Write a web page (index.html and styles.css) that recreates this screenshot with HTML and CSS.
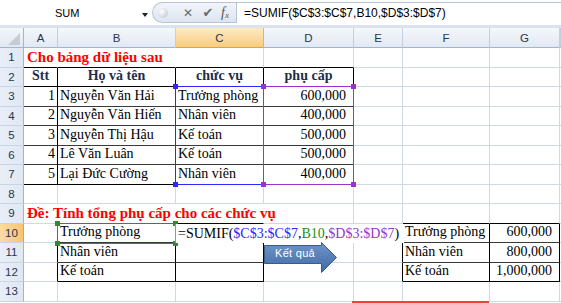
FILE: index.html
```html
<!DOCTYPE html>
<html lang="vi">
<head>
    <meta charset="UTF-8">
    <title>SUMIF</title>
    <link rel="stylesheet" href="styles.css">
</head>
<body>
    <div class="fbar">
        <div class="namebox">
            <span class="name">SUM</span>
            <span class="dd"></span>
        </div>
        <div class="fbtns">
            <span class="dot"></span>
            <span class="btn">&#x2715;</span>
            <span class="btn chk">&#x2714;</span>
            <span class="fx">f<sub>x</sub></span>
        </div>
        <div class="finput">=SUMIF($C$3:$C$7,B10,$D$3:$D$7)</div>
    </div>

    <div class="sheet">
        <!-- header -->
        <div class="corner"><span class="tri"></span></div>
        <div class="ch">A</div><div class="ch">B</div><div class="ch sel">C</div><div class="ch">D</div>
        <div class="ch">E</div><div class="ch">F</div><div class="ch">G</div><div class="ch"></div>

        <!-- 1 -->
        <div class="rh">1</div>
        <div class="c nr bb title">Cho bảng dữ liệu sau</div><div class="c nr bb"></div><div class="c bb"></div><div class="c bb"></div>
        <div class="c"></div><div class="c"></div><div class="c"></div><div class="c"></div>

        <!-- 2 -->
        <div class="rh">2</div>
        <div class="c br bb hd">Stt</div><div class="c br bb hd">Họ và tên</div><div class="c br bb hd">chức vụ</div><div class="c br bb hd">phụ cấp</div>
        <div class="c"></div><div class="c"></div><div class="c"></div><div class="c"></div>

        <!-- 3 -->
        <div class="rh">3</div>
        <div class="c br gb num">1</div><div class="c br gb">Nguyễn Văn Hải</div><div class="c br gb">Trưởng phòng</div><div class="c br gb money">600,000</div>
        <div class="c"></div><div class="c"></div><div class="c"></div><div class="c"></div>

        <!-- 4 -->
        <div class="rh">4</div>
        <div class="c br gb num">2</div><div class="c br gb">Nguyễn Văn Hiến</div><div class="c br gb">Nhân viên</div><div class="c br gb money">400,000</div>
        <div class="c"></div><div class="c"></div><div class="c"></div><div class="c"></div>

        <!-- 5 -->
        <div class="rh">5</div>
        <div class="c br gb num">3</div><div class="c br gb">Nguyễn Thị Hậu</div><div class="c br gb">Kế toán</div><div class="c br gb money">500,000</div>
        <div class="c"></div><div class="c"></div><div class="c"></div><div class="c"></div>

        <!-- 6 -->
        <div class="rh">6</div>
        <div class="c br gb num">4</div><div class="c br gb">Lê Văn Luân</div><div class="c br gb">Kế toán</div><div class="c br gb money">500,000</div>
        <div class="c"></div><div class="c"></div><div class="c"></div><div class="c"></div>

        <!-- 7 -->
        <div class="rh">7</div>
        <div class="c br bb num">5</div><div class="c br bb">Lại Đức Cường</div><div class="c br bb">Nhân viên</div><div class="c br bb money">400,000</div>
        <div class="c"></div><div class="c"></div><div class="c"></div><div class="c"></div>

        <!-- 8 -->
        <div class="rh">8</div>
        <div class="c"></div><div class="c"></div><div class="c"></div><div class="c"></div>
        <div class="c"></div><div class="c"></div><div class="c"></div><div class="c"></div>

        <!-- 9 -->
        <div class="rh">9</div>
        <div class="c nr title">Đề: Tính tổng phụ cấp cho các chức vụ</div><div class="c nr bb"></div><div class="c nr bb"></div><div class="c"></div>
        <div class="c"></div><div class="c bb"></div><div class="c bb"></div><div class="c"></div>

        <!-- 10 -->
        <div class="rh sel">10</div>
        <div class="c br"></div><div class="c br gb">Trưởng phòng</div><div class="c br gb"></div><div class="c"></div>
        <div class="c br"></div><div class="c br gb">Trưởng phòng</div><div class="c br gb money">600,000</div><div class="c"></div>

        <!-- 11 -->
        <div class="rh">11</div>
        <div class="c br"></div><div class="c br gb">Nhân viên</div><div class="c br gb"></div><div class="c"></div>
        <div class="c br"></div><div class="c br gb">Nhân viên</div><div class="c br gb money">800,000</div><div class="c"></div>

        <!-- 12 -->
        <div class="rh">12</div>
        <div class="c br"></div><div class="c br bb">Kế toán</div><div class="c br bb"></div><div class="c"></div>
        <div class="c br"></div><div class="c br bb">Kế toán</div><div class="c br bb money">1,000,000</div><div class="c"></div>

        <!-- 13 -->
        <div class="rh">13</div>
        <div class="c"></div><div class="c"></div><div class="c"></div><div class="c"></div>
        <div class="c"></div><div class="c"></div><div class="c"></div><div class="c"></div>

        <!-- vùng tham chiếu của công thức -->
        <div class="range blue">
            <i class="h tl"></i><i class="h tr"></i><i class="h bl"></i><i class="h brc"></i>
        </div>
        <div class="range purple">
            <i class="h tl"></i><i class="h tr"></i><i class="h bl"></i><i class="h brc"></i>
        </div>
        <div class="range green">
            <i class="h tl"></i><i class="h tr"></i><i class="h bl"></i><i class="h brc"></i>
        </div>

        <div class="edit">=SUMIF(<span class="f-blue">$C$3:$C$7</span>,<span class="f-green">B10</span>,<span class="f-purple">$D$3:$D$7</span>)</div>

        <div class="arrow">
            <svg width="74" height="32" viewBox="0 0 74 32">
                <defs>
                    <linearGradient id="ag" x1="0" y1="0" x2="0" y2="1">
                        <stop offset="0" stop-color="#6f95c8"/>
                        <stop offset="1" stop-color="#3e6aa6"/>
                    </linearGradient>
                </defs>
                <path d="M0.5 3.5 H57.5 V0.5 L72.5 15.5 L57.5 30.5 V21.5 H0.5 Z" fill="url(#ag)" stroke="#385d8a" stroke-width="1"/>
            </svg>
            <span class="label">Kết quả</span>
        </div>

        <div class="redline"></div>
    </div>
</body>
</html>
```

FILE: styles.css
```css
body {
    margin: 0;
    width: 561px;
    height: 303px;
    overflow: hidden;
    background: #fff;
    font-family: "Liberation Serif", serif;
}

/* thanh công thức */
.fbar {
    display: flex;
    height: 25px;
    border-bottom: 3px solid #dbe3ee;
    background: #fff;
}

.namebox {
    width: 152px;
    display: flex;
    align-items: center;
    position: relative;
    font-family: "Liberation Sans", sans-serif;
    font-size: 11px;
    color: #000;
}

.name {
    margin-left: 55px;
}

.dd {
    position: absolute;
    left: 142px;
    top: 13px;
    border-left: 3px solid transparent;
    border-right: 3px solid transparent;
    border-top: 4px solid #222;
}

.fbtns {
    width: 84px;
    display: flex;
    align-items: center;
    background: linear-gradient(#f2f5fa, #dde5f0);
    border: 1px solid #b7c4d6;
    border-right: none;
    border-radius: 12px 0 0 12px;
    margin-top: 2px;
    height: 21px;
    box-sizing: border-box;
}

.dot {
    width: 10px;
    height: 10px;
    border-radius: 50%;
    background: radial-gradient(circle at 35% 35%, #ffffff, #b9c1cc);
    margin-left: 5px;
    margin-right: 10px;
}

.btn {
    font-family: "DejaVu Sans", sans-serif;
    font-size: 12px;
    color: #666b73;
    width: 20px;
    text-align: center;
}

.chk {
    font-size: 13px;
}

.fx {
    font-family: "Liberation Serif", serif;
    font-style: italic;
    font-size: 14px;
    color: #555a62;
    margin-left: 3px;
}

.fx sub {
    font-size: 9px;
    vertical-align: -1px;
}

.finput {
    flex: 1;
    margin-top: 2px;
    height: 21px;
    box-sizing: border-box;
    border-top: 1px solid #b7c4d6;
    border-left: 1px solid #b7c4d6;
    padding-left: 7px;
    font-family: "Liberation Sans", sans-serif;
    font-size: 12px;
    line-height: 20px;
    color: #000;
}

/* bảng tính */
.sheet {
    display: grid;
    grid-template-columns: 24px 34px 118px 88px 90px 49px 87px 70px 1px;
    grid-template-rows: 20px repeat(13, 19.5px);
    height: 275px;
    overflow: hidden;
    position: relative;
}

.corner {
    background: linear-gradient(#f3f6fb, #e1e8f2);
    border-right: 1px solid #9eb6ce;
    border-bottom: 1px solid #9eb6ce;
    position: relative;
}

.tri {
    position: absolute;
    right: 3px;
    bottom: 2px;
    border-left: 12px solid transparent;
    border-bottom: 12px solid #c5ccd6;
}

.ch,
.rh {
    background: linear-gradient(#f4f7fb, #e2e9f3);
    border-right: 1px solid #c3cfdf;
    border-bottom: 1px solid #9eb6ce;
    font-family: "Liberation Sans", sans-serif;
    font-size: 11.5px;
    color: #27364e;
    display: flex;
    align-items: center;
    justify-content: center;
    box-sizing: border-box;
}

.rh {
    border-right: 1px solid #9eb6ce;
    border-bottom: 1px solid #c9d5e5;
    background: linear-gradient(90deg, #e9eff8, #dfe7f2);
}

.ch.sel {
    background: linear-gradient(#fde9c4, #f7cd7e);
    border-bottom-color: #f29a3a;
    border-right-color: #f1b060;
}

.rh.sel {
    background: linear-gradient(90deg, #fbdc9f, #f6c572);
    border-right-color: #f29a3a;
}

.c {
    border-right: 1px solid #d0d7e5;
    border-bottom: 1px solid #d0d7e5;
    box-sizing: border-box;
    display: flex;
    align-items: flex-end;
    padding: 0 2px 1px;
    font-size: 14px;
    line-height: 18px;
    white-space: nowrap;
    min-width: 0;
    color: #000;
}

.c.nr {
    border-right-color: transparent;
}

.c.br {
    border-right-color: #000;
}

.c.bb {
    border-bottom-color: #000;
}

.c.gb {
    border-bottom-color: #3a3a3a;
}

.title {
    color: #ff0000;
    font-weight: bold;
    font-size: 15px;
    padding-left: 3px;
}

.hd {
    font-weight: bold;
    justify-content: center;
    color: #1f2d4a;
}

.num {
    justify-content: flex-end;
}

.money {
    justify-content: flex-end;
    padding-right: 7px;
}

/* khung tham chiếu */
.range {
    position: absolute;
    box-sizing: border-box;
}

.range .h {
    position: absolute;
    width: 5px;
    height: 5px;
}

.range .tl { left: -3px; top: -3px; }
.range .tr { right: -3px; top: -3px; }
.range .bl { left: -3px; bottom: -3px; }
.range .brc { right: -3px; bottom: -3px; }

.blue {
    left: 175px;
    top: 58px;
    width: 89px;
    height: 99px;
    border: 1px solid #2828ff;
}

.blue .h { background: #2828ff; }

.purple {
    left: 263px;
    top: 58px;
    width: 91px;
    height: 99px;
    border: 1px solid #9933cc;
}

.purple .h { background: #9933cc; }

.green {
    left: 57px;
    top: 195px;
    width: 119px;
    height: 21px;
    border: 1px solid #2e8b2e;
}

.green .h { background: #2e8b2e; }

.edit {
    position: absolute;
    left: 175px;
    top: 196px;
    width: 226px;
    height: 19px;
    background: #fff;
    border-left: 1px solid #ff55cc;
    padding-left: 2px;
    font-size: 14px;
    line-height: 20px;
    white-space: nowrap;
    color: #000;
}

.f-blue { color: #2828ff; }
.f-green { color: #1e8c1e; }
.f-purple { color: #9933cc; }

.arrow {
    position: absolute;
    left: 264px;
    top: 214px;
    width: 74px;
    height: 32px;
}

.arrow svg {
    display: block;
}

.arrow .label {
    position: absolute;
    left: 11px;
    top: 5px;
    font-family: "Liberation Sans", sans-serif;
    font-size: 11px;
    color: #fff;
    letter-spacing: 0.3px;
}

.redline {
    position: absolute;
    left: 352px;
    top: 273px;
    width: 137px;
    height: 2px;
    background: #f04040;
}
```
